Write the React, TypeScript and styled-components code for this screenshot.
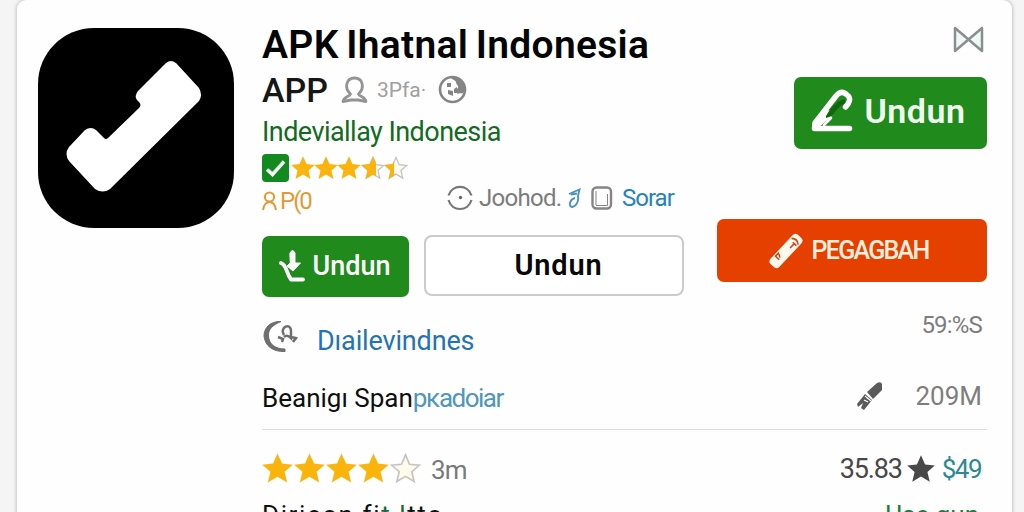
import React from 'react';
import styled, { createGlobalStyle } from 'styled-components';

const STAR = 'M12 .3l3.5 7.800 8.300.9-6.300 5.500 2 8.400-7.500-4.500-7.500 4.500 2-8.400L.2 9l8.300-.9z';

type StarsProps = { id: string; fills: number[]; size: number; gap: number };

const Stars = ({ id, fills, size, gap }: StarsProps) => (
  <StarList $gap={gap}>
    {fills.map((fill, index) => (
      <svg key={index} width={size} height={size} viewBox="0 0 24 24">
        <clipPath id={`${id}-${index}`}>
          <rect x="0" y="0" width={24 * fill} height="24" />
        </clipPath>
        {fill < 1 && <path d={STAR} fill="#fffbea" />}
        {fill < 1 && (
          <path
            d="M12 1.500l3.100 7.200 7.500.8-5.700 5 1.800 7.600-6.700-4-6.700 4 1.800-7.600-5.700-5 7.500-.8z"
            fill="none"
            stroke="#c4c4c4"
            strokeWidth="1.300"
          />
        )}
        <path d={STAR} fill="#fbb40d" clipPath={`url(#${id}-${index})`} />
      </svg>
    ))}
  </StarList>
);

const Logo = () => (
  <svg width="196" height="200" viewBox="38 28 196 200">
    <path
      fill="#fff"
      d="M166 63Q171 59 176 63L199 88Q203 95 199 101L110 189Q103 194 95 189L69 161Q64 154 69 147L85 130Q91 126 96 130L104 138Q106 140 108 138L139 108Q142 105 139 102L137 100Q134 96 138 91Z"
    />
  </svg>
);

const BowTie = () => (
  <svg width="32" height="28" viewBox="0 0 32 28" fill="#f1f7f5" stroke="#87908e" strokeWidth="2.500" strokeLinejoin="round">
    <path d="M2 2L29 25V2L2 25Z" />
  </svg>
);

const UserIcon = () => (
  <svg width="27" height="28" viewBox="0 0 27 28" fill="none" stroke="#949494" strokeWidth="2.800" strokeLinejoin="round">
    <path d="M9.500 18C3 12 5 2 13.500 2S24 12 17.500 18C18 20.500 24 20 25 25.500L17 24H10L2 25.500C3 20 9 20.500 9.500 18Z" />
  </svg>
);

const GlobeIcon = () => (
  <svg width="29" height="29" viewBox="0 0 29 29">
    <circle cx="14.500" cy="14.500" r="12.500" fill="#fff" stroke="#858585" strokeWidth="2.600" />
    <path fill="#858585" d="M13 2C21 0 28 7 27 15C26 18 24 19 22 18C19 20 17 17 19 14C22 11 18 10 18 7C17 5 15 5 13 3Z" />
    <path fill="#858585" d="M9 8h4v4H9zM10 15l5 1v5l-5-2zM16 14l3-2v6h-3z" />
  </svg>
);

const VerifiedIcon = () => (
  <svg width="27" height="28" viewBox="0 0 27 28">
    <rect width="27" height="28" rx="4" fill="#128a20" />
    <path d="M5 15.500l5.500 5L22 7.500" fill="none" stroke="#fff" strokeWidth="3.400" />
    <path d="M7 15l3.600 3L19 9" fill="none" stroke="#9ccaa0" strokeWidth=".8" />
  </svg>
);

const BadgePerson = () => (
  <svg width="15" height="20" viewBox="0 0 15 20" fill="none" stroke="#e39a35" strokeWidth="2">
    <circle cx="7.500" cy="6" r="4.600" />
    <path d="M1 19c1-6 3-8 6.500-8s5.500 2 6.500 8" />
  </svg>
);

const OrbitIcon = () => (
  <svg width="26" height="26" viewBox="0 0 26 26" fill="none" stroke="#777" strokeWidth="2.200">
    <path d="M1.500 10.500C5-1 21-1 24.500 10.500M1.500 15C5 27 21 27 24.500 15" />
    <circle cx="13.500" cy="12.500" r="1.700" fill="#666" stroke="none" />
  </svg>
);

const FeatherIcon = () => (
  <svg width="13" height="21" viewBox="0 0 13 21" fill="none" stroke="#4d93bd" strokeWidth="1.900">
    <path d="M1 6L11.500 1.500L10 8C11 13 8 19 4 19C0 18 2 11 7 10M3 6.500L9 5.500" />
  </svg>
);

const PagesIcon = () => (
  <svg width="22" height="24" viewBox="0 0 22 24" fill="none" stroke="#858585">
    <rect x="1.500" y="1.500" width="18.500" height="21" rx="4" strokeWidth="2.400" />
    <path d="M5 19V5M16.500 8V19.500H5" strokeWidth="1" />
  </svg>
);

const PencilLineIcon = () => (
  <svg width="42" height="44" viewBox="0 0 42 44" fill="none" stroke="#fff" strokeLinejoin="round" strokeLinecap="round">
    <path d="M38.500 39.500H3.500L4 34L25 7Q30 1 35 5Q41 9 37 15L34.500 18" strokeWidth="5.500" />
    <path d="M5 36L18 25" strokeWidth="7" />
    <path d="M15 27Q24 11 34 10.500V14Q26 19 21 27L15 29Z" fill="#11660f" stroke="none" />
    <path d="M13 36L20 29" strokeWidth="2.500" />
  </svg>
);

const DownloadIcon = () => (
  <svg width="26" height="34" viewBox="0 0 26 34" fill="none" stroke="#fff" strokeLinecap="round" strokeLinejoin="round">
    <path d="M2 14C8 16 7 24 12 30.500H24" strokeWidth="3.800" />
    <path d="M11 4Q13.500-1 16 4V14H21.500L14 22L8 17L11 14Z" fill="#fff" strokeWidth="1" />
  </svg>
);

const BrushIcon = () => (
  <svg width="34" height="36" viewBox="0 0 34 36">
    <g transform="rotate(43 17 18)">
      <rect x="11" y="-2" width="12" height="40" rx="4" fill="#fff8ed" />
      <path d="M12.500 5q4.500-4 9 0M16 7h5M18 7v6M13 24v5h5M14 25l3 2" fill="none" stroke="#c64a20" strokeWidth="1.600" />
    </g>
  </svg>
);

const CallIcon = () => (
  <svg width="36" height="34" viewBox="0 0 36 34" fill="none" stroke="#6e6e6e">
    <path d="M19 1.500C8 1 2 8 2 16C3 26 11 32 23 31.500V29C13 29 7 24 6.500 16C6 9 11 5 19 1.500Z" fill="#6e6e6e" strokeWidth="1" />
    <path d="M22 15C17 7 29 2 29 11V18Q25 14 22 17M16 17L21 19L20 22M29 17L34 18L31 22" strokeWidth="2.500" />
  </svg>
);

const MarkerIcon = () => (
  <svg width="27" height="30" viewBox="0 0 27 30" fill="#5b5b5b">
    <path d="M11 10L21 1Q25-1 26 2V8L17 17ZM9 12L16 18L8 28L5 26L7 21L2 25L1 22Z" />
    <path d="M8 18L12 20M9 14L15 19" stroke="#fff" strokeWidth="1.200" />
  </svg>
);

const App = () => (
  <>
    <GlobalStyle />
    <Page>
      <Card>
        <AppIcon>
          <Logo />
        </AppIcon>
        <Content>
          <Header>
            <Info>
              <Title>APK Ihatnal Indonesia</Title>
              <Subtitle>
                <AppType>APP</AppType>
                <UserIcon />
                <Installs>3Pfa·</Installs>
                <GlobeIcon />
              </Subtitle>
              <Developer>Indeviallay Indonesia</Developer>
              <Rating>
                <VerifiedIcon />
                <Stars id="top" fills={[1, 1, 1, 0.62, 0.42]} size={24} gap={-0.8} />
              </Rating>
              <Meta>
                <Tag>
                  <BadgePerson />
                  P(0
                </Tag>
                <OrbitIcon />
                <MetaText>Joohod.</MetaText>
                <FeatherIcon />
                <PagesIcon />
                <MetaLink>Sorar</MetaLink>
              </Meta>
              <Actions>
                <InstallButton>
                  <DownloadIcon />
                  Undun
                </InstallButton>
                <OutlineButton>Undun</OutlineButton>
              </Actions>
            </Info>
            <Side>
              <BowTie />
              <EditButton>
                <PencilLineIcon />
                Undun
              </EditButton>
              <ReportButton>
                <BrushIcon />
                PEGAGBAH
              </ReportButton>
            </Side>
          </Header>
          <LinkRow>
            <CallIcon />
            <DetailLink>Dıailevindnes</DetailLink>
            <Score>59:%S</Score>
          </LinkRow>
          <SizeRow>
            <SizeLabel>
              Beanigı Span<span>pĸadoiar</span>
            </SizeLabel>
            <MarkerIcon />
            <SizeValue>209M</SizeValue>
          </SizeRow>
          <ReviewRow>
            <Stars id="review" fills={[1, 1, 1, 1, 0]} size={31} gap={1} />
            <Age>3m</Age>
            <Total>35.83</Total>
            <svg width="28" height="28" viewBox="0 0 24 24">
              <path d={STAR} fill="#484848" />
            </svg>
            <Price>$49</Price>
          </ReviewRow>
          <Footer>
            <FooterText>
              Diricon fi<span>t l</span>tto
            </FooterText>
            <FooterLink>Use gun</FooterLink>
          </Footer>
        </Content>
      </Card>
    </Page>
  </>
);

export default App;

const GlobalStyle = createGlobalStyle`
  * {
    box-sizing: border-box;
  }

  body {
    margin: 0;
    overflow: hidden;
    font-family: Roboto, "Liberation Sans", sans-serif;
    background: #f5f5f6;
  }

  svg {
    display: block;
    flex: none;
  }
`;

const Page = styled.div`
  height: 512px;
  padding: 0 12px 0 17px;
  overflow: hidden;
`;

const Card = styled.main`
  display: flex;
  gap: 28px;
  height: 540px;
  padding: 0 25px 0 21px;
  border-radius: 9px;
  background: #fefefe;
  box-shadow: 0 0 4px rgba(0, 0, 0, 0.3);
`;

const AppIcon = styled.div`
  flex: none;
  width: 196px;
  height: 200px;
  margin-top: 28px;
  border-radius: 56px;
  background: #000;
`;

const Content = styled.div`
  flex: 1;
  min-width: 0;
  white-space: nowrap;
`;

const Header = styled.header`
  display: flex;
  justify-content: space-between;
  height: 298px;
`;

const Info = styled.div`
  width: 422px;
  padding-top: 22px;
`;

const Title = styled.h1`
  margin: 0;
  height: 46px;
  line-height: 46px;
  font-size: 39px;
  font-weight: 600;
  letter-spacing: 0.3px;
  word-spacing: -2.5px;
  color: #050505;
`;

const Subtitle = styled.div`
  display: flex;
  align-items: center;
  height: 43px;
`;

const AppType = styled.span`
  width: 79px;
  font-size: 34px;
  font-weight: 500;
  color: #161616;
`;

const Installs = styled.span`
  width: 70px;
  padding-left: 9px;
  font-size: 21px;
  color: #a0a0a0;
`;

const Developer = styled.div`
  height: 42px;
  line-height: 42px;
  font-size: 27px;
  letter-spacing: -0.55px;
  color: #126b20;
`;

const Rating = styled.div`
  display: flex;
  align-items: center;
  gap: 2px;
  height: 30px;
`;

const StarList = styled.div<{ $gap: number }>`
  display: flex;

  svg + svg {
    margin-left: ${({ $gap }) => $gap}px;
  }
`;

const Meta = styled.div`
  display: flex;
  align-items: center;
  height: 30px;
  font-size: 24px;
  letter-spacing: -0.7px;
`;

const Tag = styled.span`
  display: flex;
  align-items: center;
  gap: 3px;
  width: 185px;
  padding-top: 6px;
  letter-spacing: -2px;
  color: #e39a35;
`;

const MetaText = styled.span`
  width: 95px;
  padding-left: 6px;
  color: #7c7c7c;

  & + svg {
    margin-right: 10px;
  }
`;

const MetaLink = styled.span`
  padding-left: 9px;
  letter-spacing: -1px;
  color: #2583bd;
`;

const Actions = styled.div`
  display: flex;
  gap: 15px;
  padding-top: 23px;
`;

const Button = styled.button`
  display: flex;
  align-items: center;
  justify-content: center;
  padding: 0;
  border: 0;
  border-radius: 7px;
  font-family: inherit;
  font-weight: 500;
  color: #fff;
  background: #218a1d;
`;

const InstallButton = styled(Button)`
  gap: 8px;
  width: 147px;
  height: 61px;
  padding: 0 2px 1px 0;
  font-size: 27px;
`;

const OutlineButton = styled(Button)`
  width: 260px;
  height: 61px;
  margin-top: -1px;
  padding: 0 0 1px 9px;
  border: 2px solid #cbcbcd;
  border-radius: 8px;
  font-size: 29px;
  font-weight: 600;
  letter-spacing: 0.8px;
  color: #080808;
  background: #fff;
`;

const Side = styled.div`
  display: flex;
  flex-direction: column;
  align-items: flex-end;
  padding-top: 26px;

  > svg {
    margin-right: 2px;
  }
`;

const EditButton = styled(Button)`
  gap: 12px;
  width: 193px;
  height: 72px;
  margin: 23px 0 70px;
  padding: 0 5px 4px 0;
  font-size: 34px;
  font-weight: 600;
  letter-spacing: 0.5px;
  color: #f1ffef;
`;

const ReportButton = styled(Button)`
  gap: 8px;
  width: 270px;
  height: 63px;
  padding-right: 6px;
  font-size: 25px;
  letter-spacing: -1.7px;
  color: #fff0df;
  background: #e64000;
`;

const Row = styled.div`
  display: flex;
  align-items: center;
`;

const LinkRow = styled(Row)`
  height: 77px;
`;

const DetailLink = styled.a`
  flex: 1;
  padding: 8px 0 0 19px;
  font-size: 27px;
  letter-spacing: -0.15px;
  color: #2474b5;
`;

const Score = styled.span`
  padding: 0 5px 24px 0;
  font-size: 24px;
  letter-spacing: -0.8px;
  color: #7d7d7d;
`;

const SizeRow = styled(Row)`
  height: 55px;
  padding-bottom: 10px;
  border-bottom: 1px solid #dcdfe0;
`;

const SizeLabel = styled.span`
  flex: 1;
  padding-top: 2px;
  font-size: 26px;
  color: #101010;

  span {
    letter-spacing: -1.5px;
    color: #5096bd;
  }
`;

const SizeValue = styled.span`
  width: 104px;
  padding: 0 5px 3px 0;
  text-align: right;
  font-size: 26px;
  color: #7e7e7e;
`;

const ReviewRow = styled(Row)`
  height: 77px;
`;

const Age = styled.span`
  flex: 1;
  padding: 3px 0 0 10px;
  font-size: 26px;
  letter-spacing: -0.8px;
  color: #7a7a7a;
`;

const Total = styled.span`
  margin-right: 5px;
  font-size: 27px;
  letter-spacing: -1.2px;
  color: #484848;
`;

const Price = styled.span`
  padding: 0 6px 0 7px;
  font-size: 26px;
  letter-spacing: -1.5px;
  color: #2c8a93;
`;

const Footer = styled(Row)`
  justify-content: space-between;
  height: 30px;
  margin-top: -7px;
  font-size: 26px;
  line-height: 30px;
`;

const FooterText = styled.span`
  letter-spacing: 1.6px;
  color: #111;

  span {
    color: #176b3a;
  }
`;

const FooterLink = styled.a`
  padding-right: 8px;
  color: #168238;
`;
